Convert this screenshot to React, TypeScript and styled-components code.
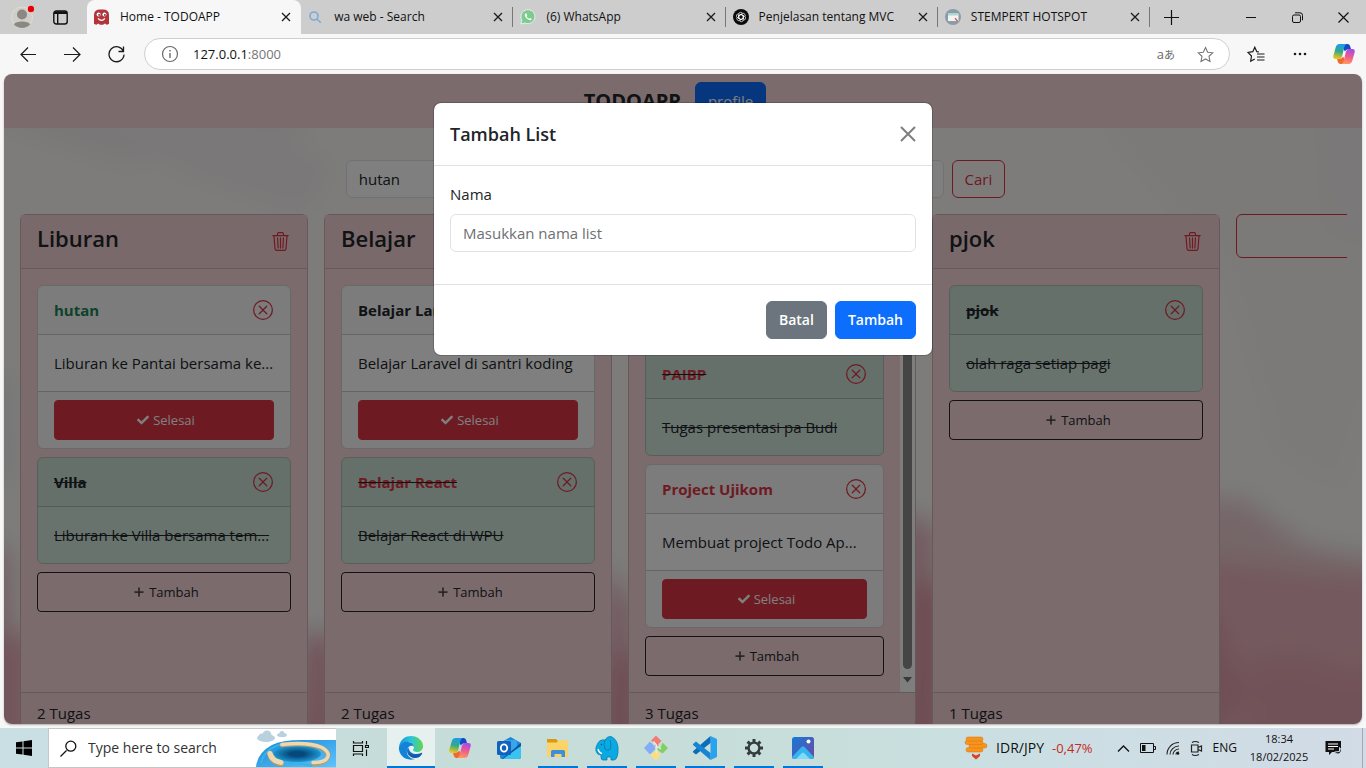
import React from "react";
import styled, { createGlobalStyle, css } from "styled-components";
import { BsPlusLg, BsTrash3, BsXCircle } from "react-icons/bs";
import { FaCheck } from "react-icons/fa";

const GlobalStyle = createGlobalStyle`
  *, *::before, *::after { box-sizing: border-box; }
  body {
    margin: 0;
    font-family: "Open Sans", "Noto Sans", sans-serif;
    font-size: 15px;
    line-height: 24px;
    color: #212529;
  }
  button, input { font: inherit; color: inherit; margin: 0; }
  button { cursor: pointer; }
  h1, h2, h3, p, ul { margin: 0; padding: 0; }
  ul { list-style: none; }
  svg { display: block; flex: none; }
`;

/* ---------- window ---------- */

const Desktop = styled.div`
  display: flex;
  flex-direction: column;
  height: 100vh;
  overflow: hidden;
  background: #f7f7f7;
`;

const BareButton = styled.button`
  display: flex;
  align-items: center;
  justify-content: center;
  padding: 0;
  border: 0;
  background: none;
  color: #1b1b1b;
`;

/* ---------- tab strip ---------- */

const TabStrip = styled.header`
  display: flex;
  flex: none;
  height: 34px;
  background: #cdcdcd;
  font-size: 12px;
`;

const StripTools = styled.div`
  display: flex;
  align-items: center;
  justify-content: space-between;
  flex: none;
  width: 87px;
  padding: 0 19px 0 10px;
`;

const TabList = styled.ul`
  display: flex;
  flex: 0 1 1063px;
  min-width: 0;
`;

const TabItem = styled.li<{ $active?: boolean; $divider?: boolean }>`
  display: flex;
  align-items: center;
  gap: 10px;
  flex: 1 1 ${(p) => (p.$active ? 214 : 212)}px;
  min-width: 0;
  padding: 0 10px 0 7px;
  border-radius: ${(p) => (p.$active ? "8px 8px 0 0" : "0")};
  background: ${(p) =>
    p.$active
      ? "#f7f7f7"
      : p.$divider
      ? "linear-gradient(#777, #777) right center / 1px 20px no-repeat"
      : "none"};
`;

const TabTitle = styled.span`
  flex: 1;
  min-width: 0;
  overflow: hidden;
  white-space: nowrap;
  color: #111;
`;

const NewTab = styled(BareButton)`
  width: 43px;
`;

const WindowControls = styled.div`
  display: flex;
  margin-left: auto;
`;

const WindowButton = styled(BareButton)`
  width: 46px;
`;

/* ---------- address bar ---------- */

const Toolbar = styled.div`
  display: flex;
  align-items: center;
  flex: none;
  height: 40px;
  padding-left: 6px;
`;

const ToolButton = styled(BareButton)`
  width: 44px;
  height: 32px;
`;

const AddressBar = styled.div`
  display: flex;
  align-items: center;
  flex: 1;
  height: 32px;
  margin: 0 4px 0 6px;
  padding: 0 15px 0 16px;
  border: 1px solid #cfcfcf;
  border-radius: 16px;
  background: #fff;
`;

const Url = styled.span`
  flex: 1;
  margin-left: 14px;
  font-size: 13px;
  color: #111;

  span {
    color: #767676;
  }
`;

const Translate = styled.span`
  margin-right: 22px;
  font-family: "Open Sans", "Noto Sans CJK JP", sans-serif;
  font-size: 13px;
  color: #6a6a6a;

  small {
    font-size: 11px;
  }
`;

/* ---------- page ---------- */

const Viewport = styled.div`
  position: relative;
  flex: 1;
  min-height: 0;
  margin: 0 4px 4px;
  overflow: hidden;
  border-radius: 8px;
  background: #fafaf9;
  box-shadow: 0 1px 2px rgba(0, 0, 0, 0.3);
`;

const Marble = styled.svg`
  position: absolute;
  inset: 0;
  width: 100%;
  height: 100%;
`;

const Page = styled.div`
  position: relative;
`;

const Navbar = styled.nav`
  display: flex;
  align-items: center;
  justify-content: center;
  gap: 14px;
  padding: 8px 16px 8px 0;
  background: #f8d7da;
`;

const Brand = styled.a`
  font-size: 20px;
  font-weight: 700;
  color: #212529;
  text-decoration: none;
`;

type Tone = "primary" | "secondary" | "outline";

const tones = {
  primary: css`
    border-color: #0d6efd;
    background: #0d6efd;
    color: #fff;
  `,
  secondary: css`
    border-color: #6c757d;
    background: #6c757d;
    color: #fff;
  `,
  outline: css`
    border-color: #dc3545;
    background: transparent;
    color: #dc3545;
  `,
};

const Button = styled.button<{ $tone: Tone; $strong?: boolean }>`
  height: 38px;
  padding: 0 12px;
  border: 1px solid;
  border-radius: 6px;
  font-size: ${(p) => (p.$strong ? 14 : 15)}px;
  font-weight: ${(p) => (p.$strong ? 600 : 400)};
  ${(p) => tones[p.$tone]}
`;

const PageBody = styled.main`
  padding-right: 15px;
`;

const SearchForm = styled.form`
  display: flex;
  gap: 8px;
  width: 50%;
  margin: 32px auto 16px;
  padding: 0 6px;
`;

const TextInput = styled.input`
  width: 100%;
  height: 38px;
  min-width: 0;
  padding: 0 12px;
  border: 1px solid #dee2e6;
  border-radius: 6px;
  background: #fff;

  &::placeholder {
    color: #6d7073;
    opacity: 1;
  }
`;

const Board = styled.div`
  display: flex;
  align-items: flex-start;
  gap: 16px;
  padding-left: 16px;
  overflow: hidden;
`;

const Column = styled.section`
  flex: none;
  width: 288px;
  border: 1px solid #cdb2b4;
  border-radius: 6px;
  background: #f8d7da;
`;

const ColumnHeader = styled.header`
  display: flex;
  align-items: flex-start;
  justify-content: space-between;
  height: 54px;
  padding: 8px 17px 8px 16px;
  border-bottom: 1px solid #cdb2b4;
  background: #f2d2d5;
`;

const ColumnTitle = styled.h2`
  font-size: 22px;
  line-height: 30px;
  font-weight: 600;
`;

const IconButton = styled.button`
  padding: 0;
  border: 0;
  background: none;
  color: #dc3545;
`;

const TrashButton = styled(IconButton)`
  align-self: center;
`;

const ColumnMain = styled.div`
  display: flex;
  height: calc(100vh - 345px);
`;

const TaskList = styled.div<{ $atEnd?: boolean }>`
  display: flex;
  flex-direction: column;
  justify-content: ${(p) => (p.$atEnd ? "flex-end" : "flex-start")};
  gap: 8px;
  flex: 1;
  min-width: 0;
  padding: 16px;
  overflow: hidden;
`;

const ScrollTrack = styled.div`
  display: flex;
  flex-direction: column;
  align-items: center;
  width: 15px;
  padding-bottom: 8px;
  background: #fcfcfc;
`;

const ScrollThumb = styled.div`
  flex: 1;
  width: 9px;
  margin: 60px 0 7px;
  border-radius: 5px;
  background: #8b8b8b;
`;

const ColumnFooter = styled.footer`
  padding: 8px 16px;
  border-top: 1px solid #cdb2b4;
  background: #f2d2d5;
`;

const Card = styled.article<{ $done?: boolean }>`
  flex: none;
  border: 1px solid ${(p) => (p.$done ? "#adbfb7" : "#d3d3d3")};
  border-radius: 6px;
  background: ${(p) => (p.$done ? "#d1e7dd" : "#fff")};
  text-decoration: ${(p) => (p.$done ? "line-through" : "none")};
`;

const CardHeader = styled.header`
  display: flex;
  align-items: center;
  justify-content: space-between;
  height: 49px;
  padding: 0 17px 0 16px;
  border-bottom: 1px solid rgba(0, 0, 0, 0.18);
  border-radius: 5px 5px 0 0;
  background: rgba(33, 37, 41, 0.03);
`;

const CardTitle = styled.h3<{ $color?: string }>`
  font-size: 15px;
  line-height: 24px;
  font-weight: 700;
  color: ${(p) => p.$color ?? "#212529"};
`;

const CardText = styled.p`
  padding: 16px 0 16px 16px;
  white-space: nowrap;
`;

const CardFooter = styled.footer`
  padding: 8px 16px;
  border-top: 1px solid rgba(0, 0, 0, 0.18);
  border-radius: 0 0 5px 5px;
  background: rgba(33, 37, 41, 0.03);
`;

const WideButton = styled.button<{ $filled?: boolean }>`
  display: flex;
  align-items: center;
  justify-content: center;
  gap: 4px;
  flex: none;
  width: 100%;
  height: 40px;
  padding: 0 0 0 4px;
  border: 1px solid ${(p) => (p.$filled ? "#dc3545" : "#212529")};
  border-radius: 4px;
  background: ${(p) => (p.$filled ? "#dc3545" : "transparent")};
  color: ${(p) => (p.$filled ? "#fff" : "#212529")};
  font-size: 13px;
`;

const AddColumn = styled.button`
  flex: none;
  width: 288px;
  height: 44px;
  border: 1px solid #dc3545;
  border-radius: 6px;
  background: transparent;
`;

/* ---------- modal ---------- */

const Backdrop = styled.div`
  position: absolute;
  inset: 0;
  padding-top: 28px;
  background: rgba(0, 0, 0, 0.5);
`;

const Dialog = styled.div`
  width: 500px;
  max-width: 100%;
  margin: 0 auto;
  border: 1px solid rgba(0, 0, 0, 0.175);
  border-radius: 8px;
  background: #fff;
  background-clip: padding-box;
`;

const DialogHeader = styled.header`
  display: flex;
  align-items: center;
  justify-content: space-between;
  padding: 16px;
  border-bottom: 1px solid #dee2e6;
`;

const DialogTitle = styled.h1`
  font-size: 18px;
  line-height: 30px;
  font-weight: 600;
`;

const DialogBody = styled.div`
  display: flex;
  flex-direction: column;
  gap: 8px;
  padding: 16px 16px 32px;
`;

const DialogFooter = styled.footer`
  display: flex;
  justify-content: flex-end;
  gap: 8px;
  padding: 16px;
  border-top: 1px solid #dee2e6;
`;

/* ---------- taskbar ---------- */

const Taskbar = styled.footer`
  display: flex;
  flex: none;
  height: 40px;
  background: linear-gradient(90deg, #c9dfe4 0%, #c6dcd9 30%, #c8dedb 60%, #cbdfe3 75%, #d2dbe6 100%);
`;

const StartButton = styled(BareButton)`
  width: 48px;
`;

const TaskSearch = styled.label`
  display: flex;
  align-items: center;
  width: 288px;
  padding-left: 11px;
  border: 1px solid #c6c6c6;
  border-right: 0;
  background: #fff;
  overflow: hidden;
`;

const TaskSearchInput = styled.input`
  flex: 1;
  min-width: 0;
  margin-left: 11px;
  padding: 0;
  border: 0;
  background: none;
  font-size: 14px;

  &::placeholder {
    color: #333;
    opacity: 1;
  }
`;

const TaskViewButton = styled(BareButton)`
  width: 48px;
  margin-right: 3px;
`;

const AppButton = styled(BareButton)<{ $state?: "open" | "active" }>`
  width: 49px;
  padding-right: 2px;
  background: ${(p) =>
    p.$state === "active"
      ? "linear-gradient(#0078d7, #0078d7) left bottom / 48px 2px no-repeat, linear-gradient(#e6f0ef, #e6f0ef) left top / 48px 40px no-repeat"
      : p.$state === "open"
      ? "linear-gradient(#0078d7, #0078d7) left 4px bottom / 40px 2px no-repeat"
      : "none"};
`;

const Tray = styled.div`
  display: flex;
  align-items: center;
  margin-left: auto;
  padding-right: 20px;
  border-right: 1px solid #9fa9b3;
  margin-right: 3px;
  font-size: 12px;
  color: #111;
`;

const Ticker = styled.div`
  display: flex;
  align-items: center;
  gap: 8px;
  margin-right: 24px;
  font-size: 14px;

  em {
    font-style: normal;
    font-size: 13px;
    color: #c42b1c;
  }
`;

const TrayIcons = styled.div`
  display: flex;
  align-items: center;
  gap: 10px;
  margin-right: 10px;
`;

const Clock = styled.div`
  width: 64px;
  margin: 0 14px 0 10px;
  font-size: 11px;
  line-height: 18px;
  text-align: center;
  white-space: nowrap;
`;

/* ---------- drawings ---------- */

const line = (size: number, d: string, color = "currentColor", width = 1) => (
  <svg width={size} height={size} viewBox={`0 0 ${size} ${size}`} fill="none" stroke={color} strokeWidth={width} aria-hidden="true">
    <path d={d} />
  </svg>
);

const AvatarIcon = () => (
  <svg width="24" height="24" viewBox="0 0 24 24" aria-hidden="true">
    <circle cx="12" cy="12.500" r="10.500" fill="#d0cecb" stroke="#e2dcd2" />
    <circle cx="12" cy="9.500" r="5" fill="#8b8781" />
    <path d="M4 19.500c1-4 15-4 16 0-3.500 4.500-12.500 4.500-16 0Z" fill="#8b8781" />
    <circle cx="21" cy="4" r="3.200" fill="#e60000" />
  </svg>
);

const WorkspaceIcon = () => (
  <svg width="15" height="15" viewBox="0 0 15 15" fill="none" stroke="#111" aria-hidden="true">
    <rect x=".8" y="1" width="13.400" height="13" rx="2.500" strokeWidth="1.400" />
    <path d="M1 3.200h13M4.700 4v10" strokeWidth="1.400" />
    <path d="M1.500 2.500h12" strokeWidth="2.400" />
  </svg>
);

const GhostIcon = () => (
  <svg width="16" height="16" viewBox="0 0 16 16" aria-hidden="true">
    <path d="M0 15V6q0-5.500 6-5.500h3q6 0 6 5.500v9l-2.500.8-1.500-1.200L9 15.800H6L4 14.600 2.500 15.800Z" fill="#b3353b" />
    <circle cx="4.600" cy="5.500" r="2" fill="#fff" />
    <circle cx="10.400" cy="5.500" r="2" fill="#fff" />
    <circle cx="5.100" cy="5.900" r=".9" fill="#4a2730" />
    <circle cx="10.900" cy="5.900" r=".9" fill="#4a2730" />
    <path d="M4 9.300q3.500 4 7 0" stroke="#fff" strokeWidth="1.200" fill="none" />
  </svg>
);

const SearchFavicon = () => line(16, "M9.200 10.200 12.800 13.800M10 7a4 4 0 1 1-8 0 4 4 0 0 1 8 0Z", "#7fa9d8", 1.6);

const WhatsAppIcon = () => (
  <svg width="16" height="16" viewBox="0 0 16 16" aria-hidden="true">
    <path d="M.8 15 1.800 11A7 7 0 1 1 5 14Z" fill="#7ecb91" stroke="#e6f1e8" />
    <path d="M5.400 4.500c-1.400 1-.4 3.200 1.200 4.800s3.800 2.600 4.800 1.400c.5-.7.3-1-.3-1.300l-1.100-.5-.9.800C8 9.300 6.900 8.200 6.600 7.300l.7-.8-.6-1.500c-.2-.6-.7-.8-1.300-.5Z" fill="#fff" />
  </svg>
);

const ChatIcon = () => (
  <svg width="16" height="16" viewBox="0 0 16 16" fill="none" aria-hidden="true">
    <circle cx="8" cy="8" r="8" fill="#0b0b0b" />
    <g stroke="#fff" strokeWidth=".7">
      {[0, 60, 120, 180, 240, 300].map((a) => (
        <path key={a} transform={`rotate(${a} 8 8)`} d="M5.700 9.300V5.200q.1-1.900 2-1.900 1.300 0 1.900 1M5.700 6.700 8 5.400l2.800 1.600" />
      ))}
    </g>
  </svg>
);

const HotspotIcon = () => (
  <svg width="16" height="16" viewBox="0 0 16 16" aria-hidden="true">
    <circle cx="8" cy="8" r="8" fill="#8c9ba8" />
    <rect x="3" y="4.500" width="10.500" height="7.500" fill="#f2f4f4" />
    <path d="M3 4.500h10.500v2H3z" fill="#a9dbd3" />
    <path d="M10 9.300 12.500 12" stroke="#e2574c" strokeWidth="1.400" />
  </svg>
);

const CloseIcon = () => line(10, "M1 1 9 9M9 1 1 9", "#1b1b1b", 1.3);

const CopilotIcon = ({ id }: { id: string }) => (
  <svg width="22" height="22" viewBox="0 0 22 22" aria-hidden="true">
    <defs>
      <linearGradient id={`${id}a`} x1=".6" y1="0" x2=".4" y2="1">
        <stop offset="0" stopColor="#1f9bf0" />
        <stop offset=".5" stopColor="#2fa98c" />
        <stop offset="1" stopColor="#f2c712" />
      </linearGradient>
      <linearGradient id={`${id}b`} x1=".6" y1="0" x2=".4" y2="1">
        <stop offset="0" stopColor="#a24bea" />
        <stop offset=".5" stopColor="#ef5a8e" />
        <stop offset="1" stopColor="#ff9a5a" />
      </linearGradient>
    </defs>
    <path d="M6.500 1h8q2 0 2.600 2l1 3.500h-3.500q-2 0-2.600 2L9 4Z" fill="#1749c4" />
    <path d="M15.500 21h-8q-2 0-2.600-2l-1-3.500h3.500q2 0 2.600-2L13 18Z" fill="#ee6a35" />
    <path d="M6.500 1h7q-1.600.8-2.200 3L9.300 12.500q-.8 3.500-3.800 3.500H2.500Q-.5 16 .4 12.500L2.800 4Q3.700 1 6.500 1Z" fill={`url(#${id}a)`} />
    <path d="M15.500 21h-7q1.600-.8 2.200-3L12.700 9.500q.8-3.500 3.800-3.500h3q3 0 2.100 3.500L19.200 18q-.9 3-3.700 3Z" fill={`url(#${id}b)`} />
  </svg>
);

const starPath = "M8.500 1.500 10.700 6.200 15.800 6.800 12 10.300 13 15.500 8.500 13 4 15.500 5 10.300 1.200 6.800 6.300 6.200Z";

const SearchArt = () => (
  <svg width="80" height="38" viewBox="0 0 80 38" aria-hidden="true">
    <defs>
      <linearGradient id="sea" x1="0" y1="0" x2="1" y2="1">
        <stop offset="0" stopColor="#1786d4" />
        <stop offset="1" stopColor="#5fc4ff" />
      </linearGradient>
      <radialGradient id="hole">
        <stop offset=".3" stopColor="#06487a" />
        <stop offset="1" stopColor="#1d96cf" />
      </radialGradient>
    </defs>
    <g fill="#b9d0de">
      <ellipse cx="10" cy="9" rx="9" ry="4" />
      <circle cx="11" cy="6" r="4.500" />
      <circle cx="6" cy="8" r="3.500" />
      <ellipse cx="26" cy="6" rx="5" ry="2" />
      <circle cx="26" cy="4.500" r="2.500" />
    </g>
    <path d="M0 38Q1 24 16 16 26 11 46 11H80V38Z" fill="url(#sea)" />
    <path d="M5 34Q8 20 26 15M20 37Q40 32 56 37" stroke="#36b4e8" strokeWidth="2" fill="none" />
    <ellipse cx="41" cy="25" rx="24" ry="8" fill="url(#hole)" />
    <g fill="none" strokeLinecap="round" strokeLinejoin="round">
      <path d="M14 25Q16 33 25 34.500" stroke="#b99a68" strokeWidth="6" />
      <path d="M14 24.500Q16 32 25 33.500" stroke="#ecd9b2" strokeWidth="5" />
      <path d="M26 16Q52 13 66 19 76 25 70 31 65 35 57 34.500" stroke="#b99a68" strokeWidth="4.500" />
      <path d="M26 15.500Q52 12.500 66 18.500 76 24.500 70 30.500 65 34 57 33.500" stroke="#ecd9b2" strokeWidth="3.500" />
    </g>
  </svg>
);

const EdgeIcon = () => (
  <svg width="26" height="26" viewBox="0 0 26 26" aria-hidden="true">
    <defs>
      <linearGradient id="edgeTop" x1="0" y1=".4" x2="1" y2=".4">
        <stop offset="0" stopColor="#1496df" />
        <stop offset=".5" stopColor="#2cc5d8" />
        <stop offset="1" stopColor="#62d64c" />
      </linearGradient>
      <linearGradient id="edgeLow" x1="0" y1="0" x2="0" y2="1">
        <stop offset="0" stopColor="#1787dc" />
        <stop offset="1" stopColor="#0f4f9f" />
      </linearGradient>
    </defs>
    <path d="M1 12C2 4 8 1 13 1c7 0 12 5 12 10 0 4-3 6-6 6-2 0-4-1-4-2s1-1 1-3c0-3-3-5-6-5-4 0-7 2-9 5Z" fill="url(#edgeTop)" />
    <path d="M1 12c2-4 6-6 9-5 4 0 6 3 6 5-1-2-6-2-7 3-1 5 3 9 8 9-9 3-17-4-16-12Z" fill="#1383d8" />
    <path d="M10 12c-3 5 1 11 7 11 3 0 5-1 7-4 .5-1 0-1.500-1-1-5 2-11 1-12-4Z" fill="url(#edgeLow)" />
  </svg>
);

const OutlookIcon = () => (
  <svg width="26" height="24" viewBox="0 0 26 24" aria-hidden="true">
    <path d="M4 7 14.500 1 25 7v14q0 2-2 2H6q-2 0-2-2Z" fill="#1a86d8" />
    <path d="M8 4h13v9l-7 4-6-4Z" fill="#3ba5ea" />
    <path d="M25 7v7L12 23H6Z" fill="#0b4fa0" />
    <path d="M25 10v11q0 2-2 2H7L22 12Z" fill="#38c3f1" />
    <rect x="1" y="5" width="14" height="14" rx="1.500" fill="#0f62bd" />
    <ellipse cx="8" cy="12" rx="3.200" ry="3.600" fill="none" stroke="#fff" strokeWidth="1.800" />
  </svg>
);

const ExplorerIcon = () => (
  <svg width="24" height="20" viewBox="0 0 24 20" aria-hidden="true">
    <path d="M1 1h9l2 2h10v8H1Z" fill="#d99a10" />
    <path d="M1 4.500h9.500l2-2H22V19H1Z" fill="#fcd367" />
    <path d="M5 19v-5.500Q5 12 6.500 12h11q1.500 0 1.500 1.500V19h-3.500v-3h-7v3Z" fill="#3c8fd8" />
  </svg>
);

const ElephantIcon = () => (
  <svg width="24" height="26" viewBox="0 0 24 26" aria-hidden="true">
    <path d="M2 10Q4 4 10 5q2-4 6-3.500 6 2.500 7 10.500.5 6-1 10-1 3-3 3h-3v-3h-4v3H8q-2 0-2-3v-2q-4 0-5-4-.5-4 1-6Z" fill="#0aa9e2" stroke="#087fb0" strokeWidth=".8" />
    <path d="M10 5q-2 4 0 9 3 3 5.500 0 1-5-.5-9" stroke="#0882b6" fill="none" />
    <circle cx="6.500" cy="9.500" r=".8" fill="#075a80" />
    <path d="M3 14q1 4 4 4.500" stroke="#fff" strokeWidth="1.300" fill="none" />
  </svg>
);

const GitIcon = () => (
  <svg width="26" height="26" viewBox="0 0 26 26" aria-hidden="true">
    <path d="M13 .5 18.500 6 15.500 9v2.500h-3V9L8 5.500Z" fill="#f27b78" />
    <path d="M7 6.500 12 11.500v3L7 19.500 1 13Z" fill="#83aef5" />
    <path d="M19.500 7.500 25 13l-5.500 5.500L14.500 15v-3l3 1Z" fill="#82ce60" />
    <path d="M13 15.500l5 4-5 6-6-5.500Z" fill="#f9df82" />
    <path d="M10.500 6.500 13.500 10v8M13.500 11l4.500 3" stroke="#e4ecdf" strokeWidth="1.400" fill="none" />
  </svg>
);

const CodeIcon = () => (
  <svg width="26" height="26" viewBox="0 0 26 26" aria-hidden="true">
    <path d="M18.500 1 25 4v18l-6.500 3Z" fill="#28a4ee" />
    <path d="M18.500 1v7L4 19.500l-3-2.300v-1Z" fill="#0b6cb8" />
    <path d="M18.500 25v-7L4 6.500 1 9v1Z" fill="#1486d4" />
  </svg>
);

const GearIcon = () => (
  <svg width="20" height="20" viewBox="0 0 20 20" fill="none" stroke="#333b3d" aria-hidden="true">
    <circle cx="10" cy="10" r="5.400" strokeWidth="2.400" />
    {[0, 45, 90, 135, 180, 225, 270, 315].map((a) => (
      <path key={a} d="M10 1v3" strokeWidth="3" transform={`rotate(${a} 10 10)`} />
    ))}
  </svg>
);

const PhotosIcon = () => (
  <svg width="24" height="24" viewBox="0 0 24 24" aria-hidden="true">
    <defs>
      <linearGradient id="photo" x1="0" y1="0" x2="1" y2="1">
        <stop offset="0" stopColor="#127bd8" />
        <stop offset="1" stopColor="#7047a2" />
      </linearGradient>
    </defs>
    <rect x="1" y="1" width="22" height="22" rx="2.500" fill="url(#photo)" />
    <path d="M1 21 10.500 11q1.500-1.500 3 0L23 21q-.5 2-2.500 2h-17Q1.500 23 1 21Z" fill="#35b4ef" />
    <path d="M5 23l6-6q1-1 2 0l6 6Z" fill="#7fdcf9" />
    <circle cx="17.500" cy="5.500" r="2" fill="#fff" />
  </svg>
);

const CoinsIcon = () => (
  <svg width="24" height="24" viewBox="0 0 24 24" aria-hidden="true">
    <g fill="#f7941d" stroke="#d9730d" strokeWidth=".5">
      <rect x="2" y="11.500" width="17" height="4.500" rx="2.200" />
      <rect x="5" y="7.500" width="18" height="4.500" rx="2.200" />
      <rect x="1" y="4.500" width="18" height="4" rx="2" />
      <rect x="2" y="1" width="17" height="4" rx="2" />
    </g>
    <path d="M8 17.500l4 2 4-2v2.500l-4 3.500-4-3.500Z" fill="#d8431f" />
  </svg>
);

/* ---------- data ---------- */

interface Task {
  title: string;
  text: string;
  done?: boolean;
  color?: string;
}

interface TodoList {
  title: string;
  count: number;
  scrolled?: boolean;
  tasks: Task[];
}

const GREEN = "#198754";
const RED = "#dc3545";

const lists: TodoList[] = [
  {
    title: "Liburan",
    count: 2,
    tasks: [
      { title: "hutan", text: "Liburan ke Pantai bersama ke...", color: GREEN },
      { title: "Villa", text: "Liburan ke Villa bersama tem...", done: true },
    ],
  },
  {
    title: "Belajar",
    count: 2,
    tasks: [
      { title: "Belajar Laravel", text: "Belajar Laravel di santri koding" },
      { title: "Belajar React", text: "Belajar React di WPU", done: true, color: RED },
    ],
  },
  {
    title: "",
    count: 3,
    scrolled: true,
    tasks: [
      { title: "PAIBP", text: "Tugas presentasi pa Budi", done: true, color: RED },
      { title: "Project Ujikom", text: "Membuat project Todo Ap...", color: RED },
    ],
  },
  {
    title: "pjok",
    count: 1,
    tasks: [{ title: "pjok", text: "olah raga setiap pagi", done: true }],
  },
];

const tabs = [
  { title: "Home - TODOAPP", icon: <GhostIcon />, active: true },
  { title: "wa web - Search", icon: <SearchFavicon /> },
  { title: "(6) WhatsApp", icon: <WhatsAppIcon /> },
  { title: "Penjelasan tentang MVC", icon: <ChatIcon /> },
  { title: "STEMPERT HOTSPOT", icon: <HotspotIcon /> },
];

const apps: { name: string; icon: React.ReactNode; state?: "open" | "active" }[] = [
  { name: "Edge", icon: <EdgeIcon />, state: "active" },
  { name: "Copilot", icon: <CopilotIcon id="task" /> },
  { name: "Outlook", icon: <OutlookIcon /> },
  { name: "File Explorer", icon: <ExplorerIcon />, state: "open" },
  { name: "Database", icon: <ElephantIcon />, state: "open" },
  { name: "Git", icon: <GitIcon />, state: "open" },
  { name: "Code", icon: <CodeIcon />, state: "open" },
  { name: "Settings", icon: <GearIcon />, state: "open" },
  { name: "Photos", icon: <PhotosIcon />, state: "open" },
];

/* ---------- components ---------- */

function TaskCard({ task }: { task: Task }) {
  return (
    <Card $done={task.done}>
      <CardHeader>
        <CardTitle $color={task.color}>{task.title}</CardTitle>
        <IconButton type="button" aria-label="Hapus tugas">
          <BsXCircle size={20} />
        </IconButton>
      </CardHeader>
      <CardText>{task.text}</CardText>
      {!task.done && (
        <CardFooter>
          <WideButton type="button" $filled>
            <FaCheck size={12} />
            Selesai
          </WideButton>
        </CardFooter>
      )}
    </Card>
  );
}

function ListColumn({ list }: { list: TodoList }) {
  return (
    <Column>
      <ColumnHeader>
        <ColumnTitle>{list.title}</ColumnTitle>
        <TrashButton type="button" aria-label="Hapus list">
          <BsTrash3 size={19} />
        </TrashButton>
      </ColumnHeader>
      <ColumnMain>
        <TaskList $atEnd={list.scrolled}>
          {list.tasks.map((task) => (
            <TaskCard key={task.title} task={task} />
          ))}
          <WideButton type="button">
            <BsPlusLg size={12} strokeWidth={0.6} />
            Tambah
          </WideButton>
        </TaskList>
        {list.scrolled && (
          <ScrollTrack>
            <ScrollThumb />
            <svg width="9" height="8" viewBox="0 0 9 8" aria-hidden="true">
              <path d="M0 1h9L4.500 6.500Z" fill="#707070" />
            </svg>
          </ScrollTrack>
        )}
      </ColumnMain>
      <ColumnFooter>{list.count} Tugas</ColumnFooter>
    </Column>
  );
}

function Background() {
  return (
    <Marble viewBox="0 0 1358 650" preserveAspectRatio="none" aria-hidden="true">
      <defs>
        <filter id="soft" x="-20%" y="-20%" width="140%" height="140%">
          <feGaussianBlur stdDeviation="12" />
        </filter>
      </defs>
      <rect width="1358" height="650" fill="#faf9f7" />
      <g filter="url(#soft)">
        <path d="M-40 -40H330L300 60 120 90-40 40Z" fill="#f3eeee" />
        <path d="M60 20 200 30 330 90 300 140 180 100Z" fill="#f4f1f1" />
        <path d="M-40 300H8L14 400-40 420Z" fill="#f0eeee" />
        <path d="M-40 450 8 480 16 690H-40Z" fill="#eac6cd" />
        <path d="M-40 560H30V700H-40Z" fill="#e6acb8" />
        <path d="M300 555 330 565 340 700H290Z" fill="#e2a4b2" />
        <path d="M600 490 630 530 640 700H590Z" fill="#e6b4bf" />
        <path d="M600 580H640V700H590Z" fill="#de9cab" />
        <path d="M900 440 930 450 940 700H896Z" fill="#e4afba" />
        <path d="M900 510H940V700H896Z" fill="#dc95a3" />
        <path d="M1100 -20 1400-20V200L1340 420 1270 380 1220 200 1100 60Z" fill="#f8f5f3" />
        <path d="M1310 20H1400V180L1320 160Z" fill="#f4f1f0" />
        <path d="M1190 425 1240 425 1300 470 1400 490V720H1190Z" fill="#ebcdd1" />
        <path d="M1180 482 1260 490 1330 500 1400 500V720H1180Z" fill="#e8b3bc" />
        <path d="M1170 540 1210 540 1240 620 1190 700Z" fill="#e09dab" />
        <path d="M1240 590 1290 580 1350 600 1400 580V720H1240Z" fill="#e3a5b0" />
      </g>
    </Marble>
  );
}

export default function App() {
  return (
    <>
      <GlobalStyle />
      <Desktop>
        <TabStrip>
          <StripTools>
            <BareButton type="button" aria-label="Profile">
              <AvatarIcon />
            </BareButton>
            <BareButton type="button" aria-label="Workspaces">
              <WorkspaceIcon />
            </BareButton>
          </StripTools>
          <TabList>
            {tabs.map((tab, i) => (
              <TabItem key={tab.title} $active={tab.active} $divider={i > 0}>
                {tab.icon}
                <TabTitle>{tab.title}</TabTitle>
                <BareButton type="button" aria-label="Close tab">
                  <CloseIcon />
                </BareButton>
              </TabItem>
            ))}
          </TabList>
          <NewTab type="button" aria-label="New tab">
            {line(15, "M7.500 0v15M0 7.500h15", "#111", 1.2)}
          </NewTab>
          <WindowControls>
            <WindowButton type="button" aria-label="Minimize">
              {line(11, "M0 5.500h10", "#111")}
            </WindowButton>
            <WindowButton type="button" aria-label="Restore">
              {line(11, "M2 3h5q1.500 0 1.500 1.500v4.500q0 1.500-1.500 1.500H2Q.5 10.500.5 9V4.500Q.5 3 2 3ZM3 .8h5q2.500 0 2.500 2.500v5", "#111")}
            </WindowButton>
            <WindowButton type="button" aria-label="Close">
              {line(11, "M.5.5l10 10M10.500.5l-10 10", "#111", 1.2)}
            </WindowButton>
          </WindowControls>
        </TabStrip>

        <Toolbar>
          <ToolButton type="button" aria-label="Back">
            {line(17, "M16 8.500H1M8 1.500 1 8.500l7 7", "#1b1b1b", 1.2)}
          </ToolButton>
          <ToolButton type="button" aria-label="Forward">
            {line(17, "M0 8.500h16M9 1.500l7 7-7 7", "#1b1b1b", 1.2)}
          </ToolButton>
          <ToolButton type="button" aria-label="Reload">
            {line(17, "M15.500 5.500A7.500 7.500 0 1 0 16 8.500M15.500.5v5h-5", "#1b1b1b", 1.3)}
          </ToolButton>
          <AddressBar>
            <svg width="18" height="18" viewBox="0 0 18 18" fill="none" stroke="#6a6a6a" aria-hidden="true">
              <circle cx="9" cy="9" r="7.500" strokeWidth="1.200" />
              <path d="M9 8v5M9 5v1.500" strokeWidth="1.400" />
            </svg>
            <Url>
              127.0.0.1<span>:8000</span>
            </Url>
            <Translate>
              a<small>あ</small>
            </Translate>
            {line(17, starPath, "#767676", 1.1)}
          </AddressBar>
          <ToolButton type="button" aria-label="Favorites">
            <svg width="18" height="17" viewBox="0 0 18 17" fill="none" stroke="#1b1b1b" strokeWidth="1.200" aria-hidden="true">
              <path d="M12 6 9.800 5.700 7.800 1.200 5.800 5.700 1 6.500 4.500 10 3.700 15.200 7.800 13M10 8h7.500M10 11h7.500M10 14h7.500" />
            </svg>
          </ToolButton>
          <ToolButton type="button" aria-label="More">
            <svg width="14" height="4" viewBox="0 0 14 4" fill="#1b1b1b" aria-hidden="true">
              <circle cx="2" cy="2" r="1.300" />
              <circle cx="7" cy="2" r="1.300" />
              <circle cx="12" cy="2" r="1.300" />
            </svg>
          </ToolButton>
          <ToolButton type="button" aria-label="Copilot">
            <CopilotIcon id="bar" />
          </ToolButton>
        </Toolbar>

        <Viewport>
          <Background />
          <Page>
            <Navbar>
              <Brand href="#">TODOAPP</Brand>
              <Button type="button" $tone="primary">
                profile
              </Button>
            </Navbar>
            <PageBody>
              <SearchForm>
                <TextInput type="text" aria-label="Cari tugas" defaultValue="hutan" />
                <Button type="button" $tone="outline">
                  Cari
                </Button>
              </SearchForm>
              <Board>
                {lists.map((list, i) => (
                  <ListColumn key={i} list={list} />
                ))}
                <AddColumn type="button" aria-label="Tambah list" />
              </Board>
            </PageBody>
          </Page>
          <Backdrop>
            <Dialog role="dialog" aria-labelledby="dialog-title">
              <DialogHeader>
                <DialogTitle id="dialog-title">Tambah List</DialogTitle>
                <BareButton type="button" aria-label="Tutup">
                  {line(16, "M1 1l14 14M15 1 1 15", "#7f7f7f", 2)}
                </BareButton>
              </DialogHeader>
              <DialogBody>
                <label htmlFor="list-name">Nama</label>
                <TextInput id="list-name" type="text" placeholder="Masukkan nama list" />
              </DialogBody>
              <DialogFooter>
                <Button type="button" $tone="secondary" $strong>
                  Batal
                </Button>
                <Button type="button" $tone="primary" $strong>
                  Tambah
                </Button>
              </DialogFooter>
            </Dialog>
          </Backdrop>
        </Viewport>

        <Taskbar>
          <StartButton type="button" aria-label="Start">
            <svg width="16" height="16" viewBox="0 0 16 16" fill="#000" aria-hidden="true">
              <path d="M0 2.300 6.500 1.400V7.500H0ZM7.500 1.200 16 0v7.500H7.500ZM0 8.500h6.500v6.100L0 13.700ZM7.500 8.500H16V16l-8.500-1.200Z" />
            </svg>
          </StartButton>
          <TaskSearch>
            {line(17, "M.5 16.500 6.500 10.500M15.800 6.200a5 5 0 1 1-10 0 5 5 0 0 1 10 0Z", "#111", 1.3)}
            <TaskSearchInput type="text" placeholder="Type here to search" />
            <SearchArt />
          </TaskSearch>
          <TaskViewButton type="button" aria-label="Task view">
            {line(17, "M1.500 1v2h9V1M1.500 16v-2h9v2M1.500 5.500h9v6h-9ZM14.500 1v3.500M14.500 9.500V16M13.500 5.500h3v2h-3Z", "#111", 1.2)}
          </TaskViewButton>
          {apps.map((app) => (
            <AppButton key={app.name} type="button" aria-label={app.name} $state={app.state}>
              {app.icon}
            </AppButton>
          ))}
          <Tray>
            <Ticker>
              <CoinsIcon />
              IDR/JPY
              <em>-0,47%</em>
            </Ticker>
            <TrayIcons>
              {line(13, "M1 9.500 6.500 4l5.500 5.500", "#111", 1.3)}
              <svg width="16" height="10" viewBox="0 0 16 10" fill="none" stroke="#111" aria-hidden="true">
                <path d="M.5.5h13v9H.5ZM14 3.500h1.500v3H14" />
                <path d="M2 2h3.500v6H2Z" fill="#111" stroke="none" />
              </svg>
              <svg width="14" height="14" viewBox="0 0 14 14" fill="none" stroke="#222" strokeWidth="1.100" aria-hidden="true">
                <path d="M1 13.500C1 7 6 1.500 13 1.500M4 13.500c0-4.500 4-8.500 9-8.500M7 13.500c0-3 3-5.500 6-5.500M10 13.500c0-1.500 1.500-2.500 3-2.500" />
                <circle cx="12" cy="12.500" r="1.300" fill="#111" stroke="none" />
              </svg>
              <svg width="13" height="17" viewBox="0 0 13 17" fill="none" stroke="#222" strokeWidth="1.200" aria-hidden="true">
                <path d="M1.500 5h6.500v7h-6.500ZM8 7.500l3.500-1.500v5L8 9.500M2 2.500q3-2 7 0M2 14.500q3 2 7 0" />
              </svg>
            </TrayIcons>
            ENG
            <Clock>
              18:34
              <br />
              18/02/2025
            </Clock>
            <svg width="17" height="16" viewBox="0 0 17 16" aria-hidden="true">
              <path d="M.5 1h15.500v11H7l-3 3v-3H.5Z" fill="#111" />
              <path d="M3 4h10M3 6.500h10M3 9h6" stroke="#fff" />
              <path d="M9.500 12a3.500 3.500 0 1 0 5-4.500v4Z" fill="#111" stroke="#d2dbe6" />
            </svg>
          </Tray>
        </Taskbar>
      </Desktop>
    </>
  );
}
